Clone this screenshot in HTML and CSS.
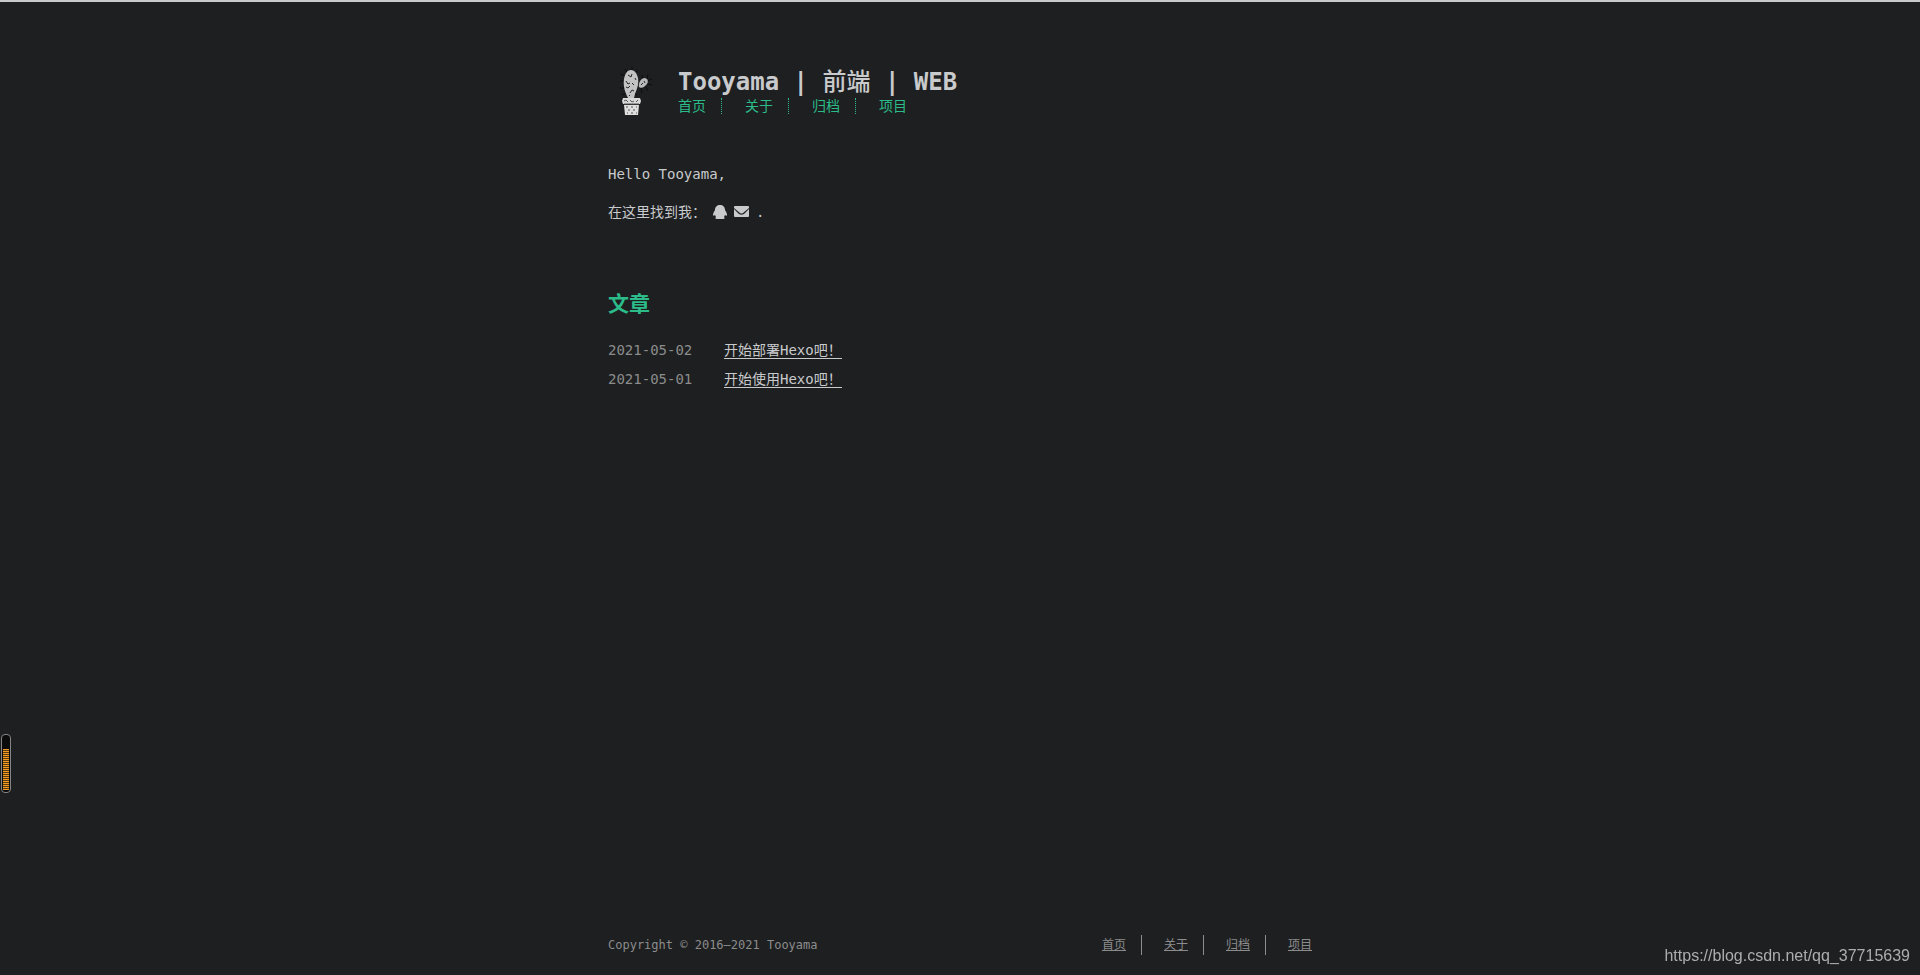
FILE: index.html
```html
<!DOCTYPE html>
<html lang="zh-CN">
<head>
	<meta charset="UTF-8">
	<title>Tooyama | 前端 | WEB</title>
	<link rel="stylesheet" href="styles.css">
</head>
<body>
	<div class="content">
		<header class="header">
			<a class="logo" href="#" aria-label="Tooyama">
				<svg width="50" height="50" viewBox="0 0 50 50">
					<path d="M17 3l2 3M24 1v4M30 4l-3 3M12 8l5 2M12 15h5M12 22h5M14 29l5-2M34 9l1 4M40 8l-1 5M44 13l-5 2M44 19l-5-1M40 25l-2-4M34 27l-1-5M29 29l-3-2" stroke="#0c0d0e" stroke-width="1"/>
					<path d="M23 4c4 0 6 4 7 8 1 6-1 11-3 16l-1 4h-6c-3-6-5-12-4-19 1-5 3-9 7-9z" fill="#c3c3c3"/>
					<path d="M31 21c-1-4 2-9 6-9 3 1 4 4 1 7-2 2-4 4-7 2z" fill="#b9b9b9"/>
					<path d="M20 9l3 2 1-3M27 12l1 2M18 15l2 3 2-1M26 19l-2-2M18 21l2 1 2-2M22 27l2-3 2 1M21 30l1-1M33 19l2-2M36 15l1 2" fill="none" stroke="#25272a" stroke-width="1"/>
					<path d="M15 32h17l1 3-1 3H15l-1-3z" fill="#d8d8d8"/>
					<path d="M16 39h15l-1 10H17z" fill="#dedede"/>
					<path d="M16 35l2-1 2 2M22 34l2 2 2-1M28 36l2-2M16 38h15" fill="none" stroke="#555" stroke-width="1"/>
					<path d="M18 41h2M23 41h2M28 41h1M20 44h2M25 44h2M19 47h1M23 47h2M28 47h1" stroke="#555" stroke-width="1"/>
				</svg>
			</a>
			<div class="title">
				<h1>Tooyama | <span>前端</span> | WEB</h1>
				<nav class="nav">
					<a href="#">首页</a>
					<a href="#">关于</a>
					<a href="#">归档</a>
					<a href="#">项目</a>
				</nav>
			</div>
		</header>

		<main>
			<section class="about">
				<p>Hello Tooyama,</p>
				<p class="social">
					<span>在这里找到我：</span>
					<a href="#" aria-label="QQ">
						<svg width="14" height="16" viewBox="0 0 14 16"><path d="M7 1c3 0 5 2 5 5 1 2 2 3 2 5 0 1-1 1-2 0l-1 2c1 1 1 2-1 2H4c-2 0-2-1-1-2l-1-2c-1 1-2 1-2 0 0-2 1-3 2-5 0-3 2-5 5-5z"/></svg>
					</a>
					<a href="#" aria-label="邮箱">
						<svg width="15" height="16" viewBox="0 0 15 16"><path d="M1 2h13a1 1 0 0 1 1 1v1L9 9q-1.500 1-3 0L0 4V3a1 1 0 0 1 1-1zM0 5l5 5q2.500 1.500 5 0l5-5v7a1 1 0 0 1-1 1H1a1 1 0 0 1-1-1z"/></svg>
					</a>
					<span>.</span>
				</p>
			</section>

			<section class="writing">
				<h2>文章</h2>
				<ul class="post-list">
					<li><time datetime="2021-05-02">2021-05-02</time><a href="#">开始部署Hexo吧！</a></li>
					<li><time datetime="2021-05-01">2021-05-01</time><a href="#">开始使用Hexo吧！</a></li>
				</ul>
			</section>
		</main>

		<footer class="footer">
			<div>Copyright © 2016–2021 Tooyama</div>
			<nav class="footer-nav">
				<a href="#">首页</a>
				<a href="#">关于</a>
				<a href="#">归档</a>
				<a href="#">项目</a>
			</nav>
		</footer>
	</div>

	<div class="meter"><div class="meter-level"></div></div>
	<div class="watermark">https://blog.csdn.net/qq_37715639</div>
</body>
</html>
```

FILE: styles.css
```css
*{
	box-sizing: border-box;
	margin: 0;
	padding: 0;
}
body{
	min-height: 100vh;
	display: flex;
	flex-direction: column;
	border-top: 2px solid #c9cacc;
	background: #1d1f21;
	color: #c9cacc;
	font-family: "DejaVu Sans Mono", "Noto Sans CJK SC", monospace;
	font-size: 14px;
	line-height: 24px;
}
a{
	color: inherit;
	text-decoration: none;
}
.content{
	flex: 1;
	display: flex;
	flex-direction: column;
	width: 100%;
	max-width: 768px;
	margin: 0 auto;
	padding: 64px 32px 20px;
}
main{
	flex: 1;
}

/* header */
.header{
	display: flex;
	gap: 20px;
	margin-bottom: 46px;
}
.logo svg{
	display: block;
}
.title h1{
	font-size: 24px;
	line-height: 28px;
	font-weight: bold;
}
.title h1 span{
	font-family: "Noto Sans CJK SC", sans-serif;
	font-weight: 500;
}
.nav{
	display: flex;
	color: #2bbc8a;
}
.nav a{
	line-height: 16px;
	margin: 2px 23px 2px 0;
	padding-right: 15px;
	border-right: 1px dotted #2bbc8a;
}
.nav a:last-child,
.footer-nav a:last-child{
	margin-right: 0;
	padding-right: 0;
	border-right: 0;
}

/* about */
.about p{
	margin-bottom: 14px;
}
.social{
	display: flex;
	align-items: center;
	gap: 7px;
}
.social svg{
	display: block;
	fill: #c9cacc;
}

/* posts */
.writing h2{
	margin: 66px 0 22px;
	color: #2bbc8a;
	font-size: 21px;
	line-height: 28px;
	font-weight: bold;
}
.post-list{
	list-style: none;
}
.post-list li{
	display: flex;
	margin-bottom: 9px;
	line-height: 20px;
}
.post-list time{
	width: 116px;
	color: #8c8c8c;
}
.post-list a{
	height: 19px;
	border-bottom: 1px solid #c9cacc;
}

/* footer */
.footer{
	display: flex;
	justify-content: space-between;
	align-items: center;
	color: #8c8c8c;
	font-size: 12px;
	line-height: 20px;
}
.footer-nav{
	display: flex;
}
.footer-nav a{
	margin-right: 22px;
	padding-right: 15px;
	border-right: 1px solid #8c8c8c;
	text-decoration: underline;
}

/* floating items */
.meter{
	position: fixed;
	left: 1px;
	bottom: 182px;
	width: 10px;
	height: 59px;
	padding: 14px 1px 2px;
	border: 1px solid #858585;
	border-radius: 4px;
	background: #0b0b0b;
}
.meter-level{
	height: 100%;
	background: repeating-linear-gradient(#f39a20 0 1px, #5a3a10 1px 2px);
}
.watermark{
	position: fixed;
	right: 10px;
	bottom: 7px;
	color: #acadae;
	font-family: "Liberation Sans", Arial, sans-serif;
	font-size: 16px;
}
```
